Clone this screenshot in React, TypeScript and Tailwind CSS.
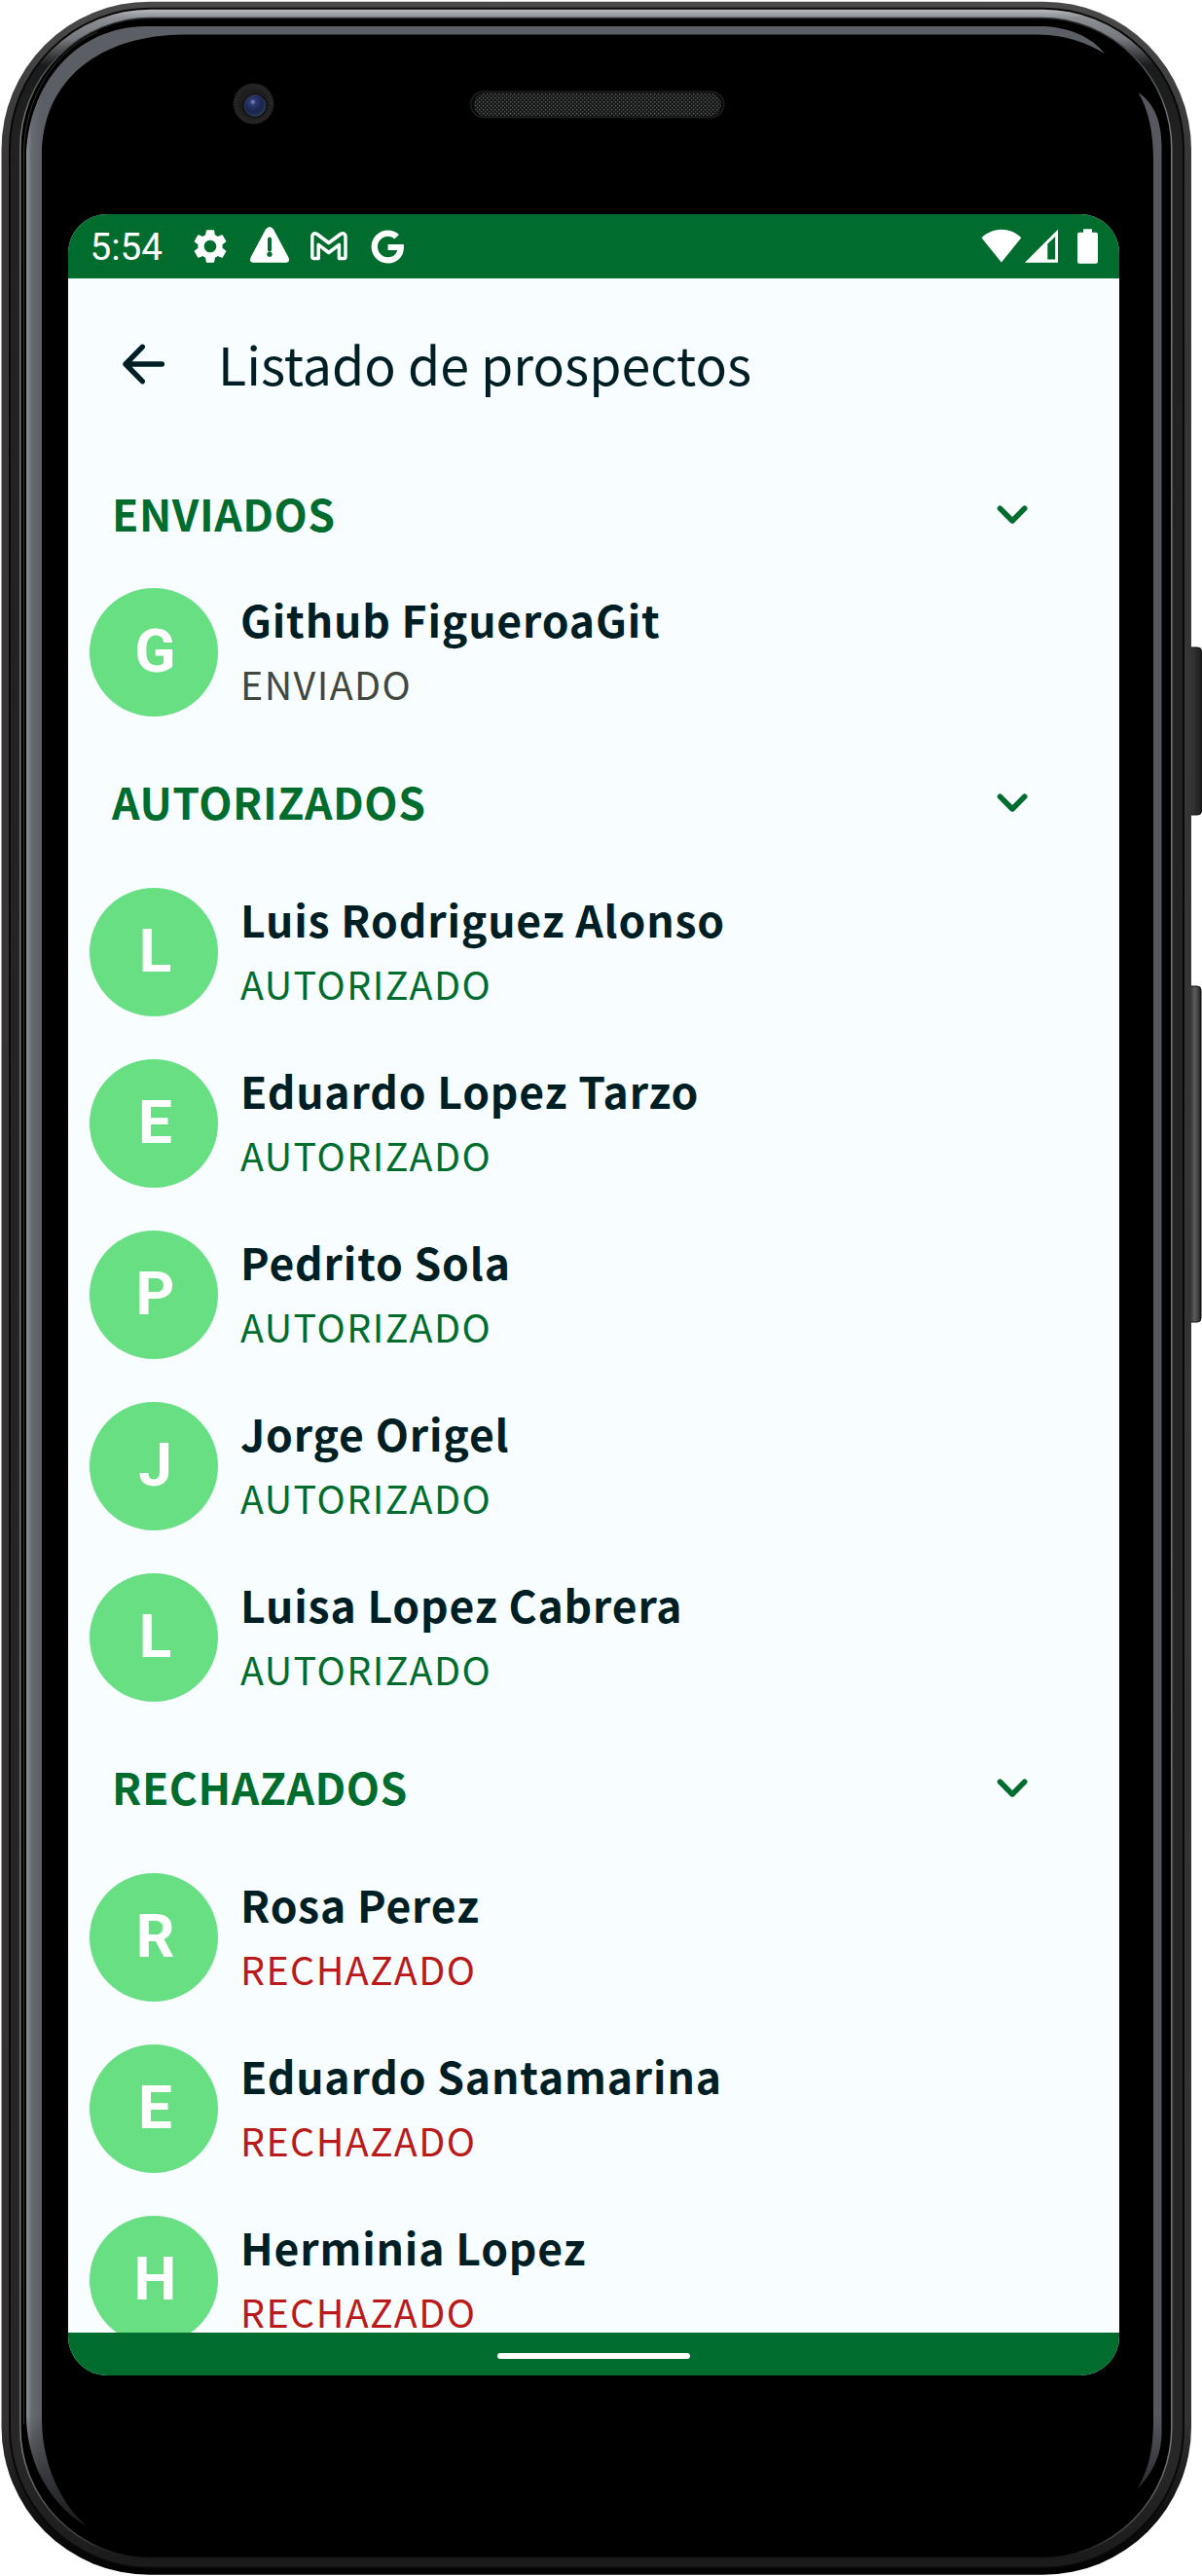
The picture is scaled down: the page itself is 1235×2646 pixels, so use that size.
import { MdSettings } from "react-icons/md";
import { FaGoogle } from "react-icons/fa";

type Status = "ENVIADO" | "AUTORIZADO" | "RECHAZADO";

interface Section {
  title: string;
  status: Status;
  names: string[];
}

const sections: Section[] = [
  { title: "ENVIADOS", status: "ENVIADO", names: ["Github FigueroaGit"] },
  {
    title: "AUTORIZADOS",
    status: "AUTORIZADO",
    names: ["Luis Rodriguez Alonso", "Eduardo Lopez Tarzo", "Pedrito Sola", "Jorge Origel", "Luisa Lopez Cabrera"],
  },
  { title: "RECHAZADOS", status: "RECHAZADO", names: ["Rosa Perez", "Eduardo Santamarina", "Herminia Lopez"] },
];

const statusColor: Record<Status, string> = {
  ENVIADO: "text-[#43483f]",
  AUTORIZADO: "text-[#006d2f]",
  RECHAZADO: "text-[#ba1a1a]",
};

/* Illustration of the handset: metal rim, glass reflections, camera, speaker and side keys. */
function PhoneBody() {
  return (
    <svg className="absolute inset-0" width="1235" height="2646" viewBox="0 0 1235 2646" aria-hidden="true">
      <defs>
        <linearGradient id="rim" gradientUnits="userSpaceOnUse" x1="0" y1="0" x2="0" y2="2646">
          <stop offset="0" stopColor="#4a4a4a" />
          <stop offset="0.06" stopColor="#383637" />
          <stop offset="0.94" stopColor="#343132" />
          <stop offset="0.975" stopColor="#111111" />
          <stop offset="1" stopColor="#000000" />
        </linearGradient>
        <linearGradient id="bevel" gradientUnits="userSpaceOnUse" x1="0" y1="9" x2="0" y2="2637">
          <stop offset="0" stopColor="#bcbec1" />
          <stop offset="0.0035" stopColor="#8b8e92" />
          <stop offset="0.012" stopColor="#74777b" />
          <stop offset="0.022" stopColor="#1a1b1c" />
          <stop offset="0.05" stopColor="#202120" />
          <stop offset="0.96" stopColor="#272727" />
          <stop offset="1" stopColor="#1a1a1a" />
        </linearGradient>
        <linearGradient id="edge" gradientUnits="userSpaceOnUse" x1="0" y1="0" x2="0" y2="2646">
          <stop offset="0" stopColor="#222222" />
          <stop offset="0.05" stopColor="#777777" />
          <stop offset="0.95" stopColor="#777777" />
          <stop offset="0.985" stopColor="#444444" />
          <stop offset="0.993" stopColor="#151515" />
        </linearGradient>
        <linearGradient id="glassLeft" gradientUnits="userSpaceOnUse" x1="27" y1="0" x2="43" y2="0">
          <stop offset="0" stopColor="#8d8f94" />
          <stop offset="0.35" stopColor="#676a71" />
          <stop offset="1" stopColor="#5c5e65" />
        </linearGradient>
        <linearGradient id="tipFade" gradientUnits="userSpaceOnUse" x1="0" y1="2480" x2="0" y2="2596">
          <stop offset="0" stopColor="#000000" stopOpacity="0" />
          <stop offset="1" stopColor="#000000" stopOpacity="0.75" />
        </linearGradient>
        <linearGradient id="power" x1="0" y1="0" x2="1" y2="0">
          <stop offset="0" stopColor="#111111" />
          <stop offset="0.45" stopColor="#333333" />
          <stop offset="1" stopColor="#1c1c1c" />
        </linearGradient>
        <linearGradient id="volume" x1="0" y1="0" x2="1" y2="0">
          <stop offset="0" stopColor="#111111" />
          <stop offset="0.6" stopColor="#5c5c5c" />
          <stop offset="0.85" stopColor="#3a3a3a" />
          <stop offset="1" stopColor="#111111" />
        </linearGradient>
        <radialGradient id="lens" cx="0.4" cy="0.33" r="0.7">
          <stop offset="0" stopColor="#8a96c0" />
          <stop offset="0.2" stopColor="#2c3a72" />
          <stop offset="0.65" stopColor="#1a2450" />
          <stop offset="1" stopColor="#2c3a50" />
        </radialGradient>
        <pattern id="mesh" width="4" height="4" patternUnits="userSpaceOnUse">
          <rect width="4" height="4" fill="#161717" />
          <rect width="1.4" height="1.4" fill="#5a5c5c" />
          <rect x="2" y="2" width="1.4" height="1.4" fill="#4c4e4e" />
        </pattern>
      </defs>

      <rect x="1218" y="665" width="16.5" height="172" rx="4" fill="url(#power)" stroke="#151515" />
      <rect x="1218" y="1013" width="16" height="345" rx="4" fill="url(#volume)" stroke="#111111" />

      <rect x="1.5" y="1.7" width="1222.5" height="2643" rx="152" fill="url(#rim)" />
      <rect x="10" y="8.7" width="1206" height="2629" rx="144" fill="url(#bevel)" stroke="#080808" strokeWidth="2" />
      <rect x="20.8" y="18.5" width="1183" height="2609" rx="134" fill="#000000" stroke="url(#edge)" strokeWidth="1.5" />
      <path d="M24.5 2490V158C24.5 100 58 50 100 33" fill="none" stroke="#333436" />

      <path
        d="M88 2594C48 2570 27 2525 27 2480V165C27 85 80 27 150 27H1072C1098 28 1122 38 1135 55C1115 43 1095 36 1066 35.5H190C105 35.5 43 80 43 160V2485C43 2530 62 2572 88 2594Z"
        fill="url(#glassLeft)"
      />
      <path d="M88 2594C48 2570 27 2525 27 2480H43V2485C43 2530 62 2572 88 2594Z" fill="url(#tipFade)" />
      <path
        d="M1169.5 95C1186 106 1193.5 125 1193.5 150V2500C1193 2525 1182 2542 1169 2556C1180 2536 1184.5 2518 1185 2490V165C1185 135 1180 113 1169.5 95Z"
        fill="#57585f"
      />
      <path d="M1193.5 2480V2500C1193 2525 1182 2542 1169 2556C1180 2536 1184.5 2518 1185 2480Z" fill="url(#tipFade)" />

      <circle cx="260.5" cy="106.5" r="21" fill="#1e1e1f" />
      <circle cx="260.5" cy="106.5" r="18" fill="none" stroke="#2a2a2b" strokeWidth="4" strokeDasharray="1.5 1.5" />
      <circle cx="262" cy="108.5" r="12.5" fill="#0b0c12" />
      <circle cx="262" cy="108.5" r="11" fill="url(#lens)" stroke="#343b48" />

      <rect x="483.7" y="94" width="260" height="26.5" rx="13.2" fill="#08090a" stroke="#1c1d20" strokeWidth="1.5" />
      <rect x="487" y="95.5" width="254" height="24" rx="12" fill="url(#mesh)" />
    </svg>
  );
}

function StatusBar() {
  return (
    <div className="flex h-[66px] shrink-0 items-center bg-[#006d2f] text-white">
      <span className="ml-[22.5px] w-[83px] pt-[3px] font-['Roboto'] text-[38.7px] leading-none">5:54</span>
      <MdSettings className="ml-[19.5px] size-[42px]" />
      <svg className="ml-[19px]" width="42" height="66" viewBox="0 0 42 66">
        <path d="M17 15.6Q21 10.5 25 15.6L40 43.5Q43 49.6 37 49.8H5Q-1 49.6 2 43.5Z" fill="currentColor" />
        <path d="M21 25.5V36.5" stroke="#006d2f" strokeWidth="4" strokeLinecap="round" />
        <circle cx="21" cy="41.2" r="2.6" fill="#006d2f" />
      </svg>
      <svg className="ml-5" width="42" height="66" viewBox="0 0 42 66">
        <path
          d="M2.8 43.5V22.5Q3.8 18.1 7.8 20.5L19.8 29.5L31.8 20.5Q36 18.1 37 22.5V43.5Q37 45.6 35.2 45.6H30.4V31.3L19.8 39.5L9.2 31.3V45.6H4.7Q2.8 45.6 2.8 43.5Z"
          fill="none"
          stroke="currentColor"
          strokeWidth="3.5"
          strokeLinejoin="round"
        />
      </svg>
      <FaGoogle className="ml-[21px] h-[35px] w-[34.5px]" />
      <div className="ml-auto mr-[22px] flex">
        <svg width="42" height="66" viewBox="0 0 42 66">
          <path d="M0.5 24.2C12 13 30 13 41.3 24.2L20.9 49.5Z" fill="currentColor" />
        </svg>
        <svg className="ml-[3px]" width="34" height="66" viewBox="0 0 34 66">
          <path
            fillRule="evenodd"
            d="M0 49.7L34 15.7V49.7ZM23.3 30.5V46.6H31.2V23Z"
            fill="currentColor"
          />
        </svg>
        <svg className="ml-5" width="21" height="66" viewBox="0 0 21 66">
          <path d="M6 15.3H15V18.8H19Q21 18.8 21 21V48.5Q21 50.7 19 50.7H2Q0 50.7 0 48.5V21Q0 18.8 2 18.8H6Z" fill="currentColor" />
        </svg>
      </div>
    </div>
  );
}

function AppBar() {
  return (
    <header className="flex h-44 shrink-0 items-center pl-[45px]">
      <svg width="66" height="66" viewBox="0 0 66 66" fill="none" stroke="#001f25" strokeWidth="5.4" strokeLinecap="round" strokeLinejoin="round">
        <path d="M31.3 15.3L14 33L31.3 50.7M14 33H51.4" />
      </svg>
      <h1 className="ml-[43px] whitespace-nowrap pb-[3px] text-[53.7px] leading-[77px]">Listado de prospectos</h1>
    </header>
  );
}

function SectionHeader({ title, first }: { title: string; first: boolean }) {
  return (
    <div className={`flex shrink-0 items-center justify-between pl-[45px] pr-[77px] text-[#006d2f] ${first ? "h-[142px] pb-2.5" : "h-44"}`}>
      <h2 className="pb-[3px] text-[44.5px] font-bold leading-[66px] tracking-[0.55px]">{title}</h2>
      <svg width="66" height="66" viewBox="0 0 66 66" fill="none" stroke="currentColor" strokeWidth="5.6" strokeLinecap="round" strokeLinejoin="round">
        <path d="M20.5 27.3L33.1 39.9L45.7 27.3" />
      </svg>
    </div>
  );
}

function ProspectRow({ name, status }: { name: string; status: Status }) {
  return (
    <li className="flex h-33 shrink-0 pl-[22px]">
      <div className="flex size-33 items-center justify-center rounded-full bg-[#69df84] pb-0.5 pl-[3px] font-['Roboto'] text-[62px] font-bold leading-none text-white">
        {name[0]}
      </div>
      <div className="ml-[23px] flex flex-col whitespace-nowrap">
        <span className="text-[44.5px] font-bold leading-[63px] tracking-[0.83px]">{name}</span>
        <span className={`text-[39.4px] leading-[69px] tracking-[1.45px] ${statusColor[status]}`}>{status}</span>
      </div>
    </li>
  );
}

export default function App() {
  return (
    <div className="relative h-[2646px] w-[1235px] overflow-hidden bg-white pl-[70px] pt-[220px]">
      <PhoneBody />
      <main className="relative flex h-[2220px] w-[1080px] flex-col overflow-hidden rounded-[40px] bg-[#f8fdff] font-['Noto_Sans_CJK_SC',sans-serif] text-[#001f25]">
        <StatusBar />
        <AppBar />
        <div className="flex min-h-0 flex-1 flex-col overflow-hidden">
          {sections.map((section, i) => (
            <section key={section.title} className="shrink-0">
              <SectionHeader title={section.title} first={i === 0} />
              <ul className="flex flex-col gap-11">
                {section.names.map((name) => (
                  <ProspectRow key={name} name={name} status={section.status} />
                ))}
              </ul>
            </section>
          ))}
        </div>
        <div className="flex h-11 shrink-0 items-center justify-center bg-[#006d2f] pt-1">
          <div className="h-1.5 w-[198px] rounded-full bg-white" />
        </div>
      </main>
    </div>
  );
}
